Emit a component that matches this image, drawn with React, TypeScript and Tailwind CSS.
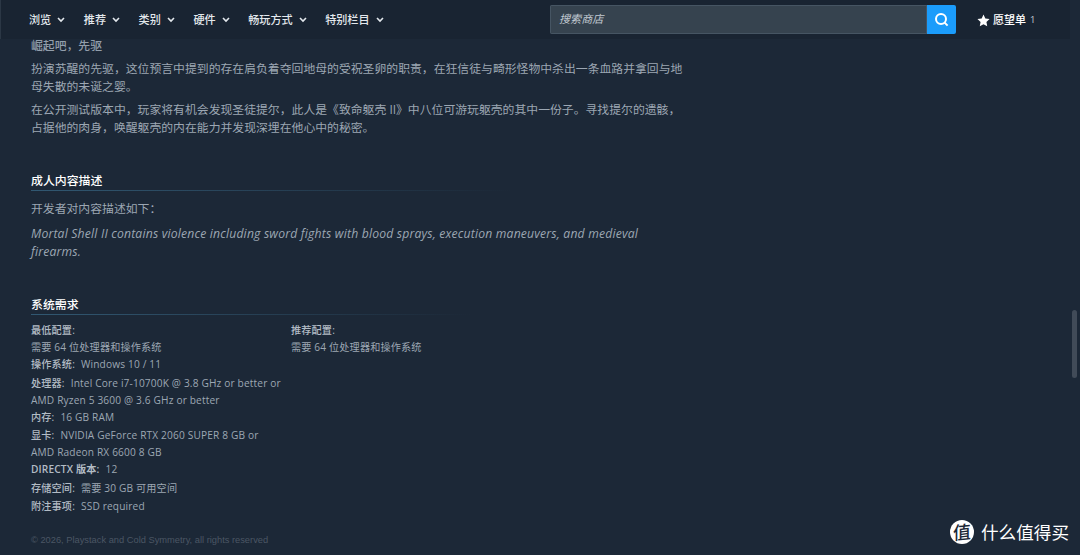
import type { ReactNode } from "react";
import clsx from "clsx";

const menu = ["浏览", "推荐", "类别", "硬件", "畅玩方式", "特别栏目"];

function Header() {
  return (
    <header className="flex h-[39px] w-[1070px] shrink-0 items-center border-l border-[#2b3745] bg-[#192432]">
      <nav className="flex w-[521px] gap-[18.6px] pt-px pl-7 text-[11.1px] font-medium text-[#e3e8ed]">
        {menu.map((item) => (
          <button key={item} className="flex items-center gap-[6px] whitespace-nowrap">
            {item}
            <svg width="8" height="6" viewBox="0 0 8 6" fill="none" stroke="currentColor" strokeWidth="1.6">
              <path d="M1 1l3 3 3-3" />
            </svg>
          </button>
        ))}
      </nav>
      <div className="ml-[28px] flex h-[29px] w-[406px] overflow-hidden rounded-[2px]">
        <div className="flex flex-1 items-center border border-[#465563] bg-[#36434f] pl-[8px] text-[11.1px] italic text-[#c2cad2]">
          搜索商店
        </div>
        <button className="flex w-[29px] items-center justify-center bg-[#1b9cfb] text-white">
          <svg width="15" height="15" viewBox="0 0 15 15" fill="none" stroke="currentColor" strokeWidth="2">
            <circle cx="7" cy="7" r="5" />
            <path d="M10.4 10.4l3.2 3.2" />
          </svg>
        </button>
      </div>
      <a className="ml-[21px] flex items-center pt-px text-[11px] font-medium text-white">
        <svg width="13" height="13" viewBox="0 0 24 24" fill="currentColor">
          <path d="M12 1l3.4 7.2 7.8 1-5.8 5.4 1.5 7.9L12 18.7l-6.9 3.8 1.5-7.9L.8 9.2l7.8-1z" />
        </svg>
        <span className="ml-[3px]">愿望单</span>
        <span className="mt-px ml-1 text-[9.5px] font-normal text-[#c2cad2]">1</span>
      </a>
    </header>
  );
}

function Line({ className, children }: { className?: string; children: ReactNode }) {
  return <div className={clsx("whitespace-nowrap", className)}>{children}</div>;
}

function Heading({ children, className }: { children: ReactNode; className?: string }) {
  return (
    <div className={className}>
      <h2 className="h-5 text-[11.9px] leading-5 font-medium text-white">{children}</h2>
      <div className="h-px bg-linear-to-r from-[#315872] to-transparent" />
    </div>
  );
}

function Spec({ label, children, className }: { label: string; children: ReactNode; className?: string }) {
  return (
    <li className={clsx("whitespace-nowrap", className)}>
      <strong className="mr-[6px] font-medium text-[#b3bcc5]">{label}:</strong>
      {children}
    </li>
  );
}

export default function App() {
  return (
    <div className="relative flex h-[555px] w-[1080px] flex-col overflow-hidden bg-[#1c2837] font-['Open_Sans','Noto_Sans_CJK_SC',sans-serif] text-[#9ca7b3]">
      <Header />
      <main className="flex flex-col pl-[31px]">
        <section className="text-[11.85px] leading-[18px]">
          <Line className="-mt-[3px] font-medium text-[#929eab]">崛起吧，先驱</Line>
          <Line className="mt-[5px]">
            扮演苏醒的先驱，这位预言中提到的存在肩负着夺回地母的受祝圣卵的职责，在狂信徒与畸形怪物中杀出一条血路并拿回与地
          </Line>
          <Line>母失散的未诞之婴。</Line>
          <Line className="mt-[5px]">
            在公开测试版本中，玩家将有机会发现圣徒提尔，此人是《致命躯壳 II》中八位可游玩躯壳的其中一份子。寻找提尔的遗骸，
          </Line>
          <Line>占据他的肉身，唤醒躯壳的内在能力并发现深埋在他心中的秘密。</Line>
        </section>

        <section className="mt-[34px] text-[11.85px] leading-[18px]">
          <Heading className="w-[480px]">成人内容描述</Heading>
          <Line className="mt-[8px]">开发者对内容描述如下：</Line>
          <Line className="mt-[8px] text-[12.2px] font-medium tracking-[0.18px] italic">
            Mortal Shell II contains violence including sword fights with blood sprays, execution maneuvers, and medieval
          </Line>
          <Line className="text-[12.2px] font-medium tracking-[0.18px] italic">firearms.</Line>
        </section>

        <section className="mt-[33px] text-[10.15px] leading-[17px]">
          <Heading className="w-[440px]">系统需求</Heading>
          <div className="mt-[7px] flex">
            <ul className="w-[260px] tracking-[0.16px]">
              <Spec label="最低配置">{null}</Spec>
              <li>需要 64 位处理器和操作系统</li>
              <Spec label="操作系统">Windows 10 / 11</Spec>
              <Spec label="处理器" className="mt-[2px]">
                Intel Core i7-10700K @ 3.8 GHz or better or
                <br />
                AMD Ryzen 5 3600 @ 3.6 GHz or better
              </Spec>
              <Spec label="内存">16 GB RAM</Spec>
              <Spec label="显卡" className="mt-px">
                NVIDIA GeForce RTX 2060 SUPER 8 GB or
                <br />
                AMD Radeon RX 6600 8 GB
              </Spec>
              <Spec label="DIRECTX 版本" className="[&>strong]:font-semibold">12</Spec>
              <Spec label="存储空间" className="mt-[2px]">需要 30 GB 可用空间</Spec>
              <Spec label="附注事项" className="mt-px">SSD required</Spec>
            </ul>
            <ul className="tracking-[0.16px]">
              <Spec label="推荐配置">{null}</Spec>
              <li>需要 64 位处理器和操作系统</li>
            </ul>
          </div>
        </section>
        <footer className="mt-[17px] font-['Liberation_Sans',sans-serif] text-[9.3px] leading-[17px] whitespace-nowrap text-[#4b5664]">
          © 2026, Playstack and Cold Symmetry, all rights reserved
        </footer>
      </main>

      <div className="absolute top-[310px] right-[3px] h-[68px] w-[5px] rounded-full bg-[#414b58]" />

      <div className="absolute right-[11px] bottom-[11px] flex items-center gap-[7px] text-[17.6px] leading-6 text-white">
        <span className="flex size-6 items-center justify-center rounded-full bg-white text-[18px] font-medium text-[#1c2837]">
          <span className="-rotate-6 -skew-x-6">值</span>
        </span>
        什么值得买
      </div>
    </div>
  );
}
